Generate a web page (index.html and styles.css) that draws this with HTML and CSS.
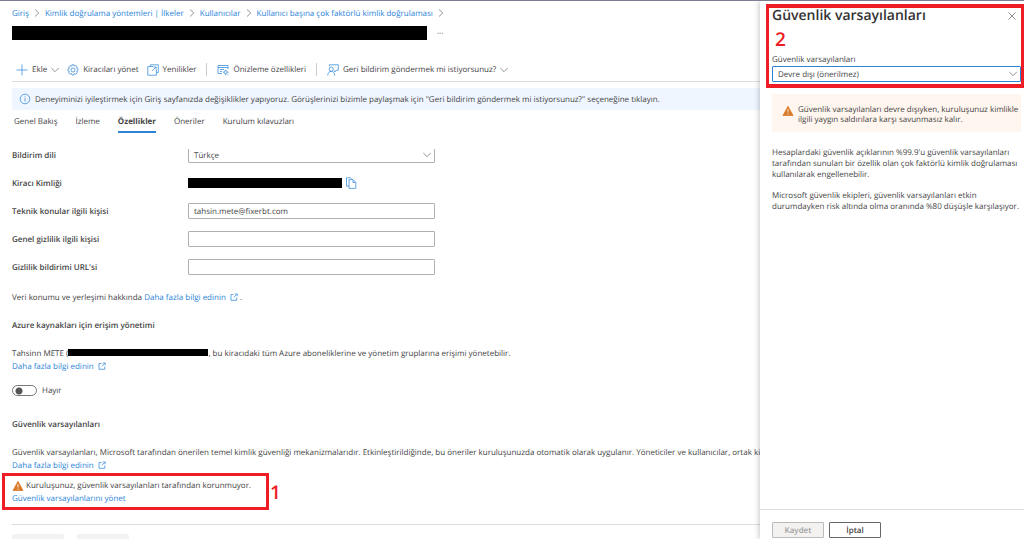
FILE: index.html
```html
<!DOCTYPE html>
<html lang="tr">
<head>
    <meta charset="utf-8">
    <title>Güvenlik varsayılanları</title>
    <link rel="stylesheet" href="styles.css">
</head>
<body>
    <svg class="symbols" aria-hidden="true">
        <symbol id="chevron-right" viewBox="0 0 8 8"><path d="M2 .5 5.8 4 2 7.5"/></symbol>
        <symbol id="chevron-down" viewBox="0 0 8 8"><path d="M.3 2 4 5.7 7.7 2"/></symbol>
        <symbol id="external" viewBox="0 0 8 8"><path d="M3.5 1.5H1v5.8h5.8V4.5M4.8 1h2.4v2.2M7 1.2 3.8 4.4"/></symbol>
        <symbol id="warning" viewBox="0 0 12 12">
            <path class="sign" d="M6 1.3 11 10.5H1Z"/>
            <path class="mark" d="M6 4v3.6M6 8.6v1.2"/>
        </symbol>
    </svg>

    <main>
        <nav class="breadcrumb" aria-label="İçerik haritası">
            <a href="#">Giriş</a>
            <svg class="icon small"><use href="#chevron-right"/></svg>
            <a href="#">Kimlik doğrulama yöntemleri | İlkeler</a>
            <svg class="icon small"><use href="#chevron-right"/></svg>
            <a href="#">Kullanıcılar</a>
            <svg class="icon small"><use href="#chevron-right"/></svg>
            <a href="#">Kullanıcı başına çok faktörlü kimlik doğrulaması</a>
            <svg class="icon small"><use href="#chevron-right"/></svg>
        </nav>

        <div class="title">
            <span class="redacted name"></span>
            <button class="more" aria-label="Diğer">···</button>
        </div>

        <div class="toolbar">
            <button>
                <svg class="icon blue" viewBox="0 0 12 12"><path d="M6 .5v11M.5 6h11"/></svg>
                Ekle
                <svg class="icon small"><use href="#chevron-down"/></svg>
            </button>
            <button>
                <svg class="icon blue" viewBox="0 0 12 12">
                    <path d="m5 .8 2 0 .4 1.3 1.3-.6 1.5 1.4-.6 1.3 1.4.6v2L9.6 7.5l.6 1.4-1.4 1.4-1.4-.6L6.9 11H5l-.5-1.4-1.3.6-1.5-1.4.7-1.3L1 7V5l1.4-.6-.7-1.3 1.4-1.5 1.4.6Z"/>
                    <circle cx="6" cy="6" r="2"/>
                </svg>
                Kiracıları yönet
            </button>
            <button>
                <svg class="icon blue" viewBox="0 0 12 12">
                    <path d="M3.5 2.5V.8h7.8v7.7H9.5M6 2.5H.8v8.7h8.6V6"/>
                    <path d="M5 7 8.8 3.2M6.4 3h2.7v2.7"/>
                </svg>
                Yenilikler
            </button>
            <span class="separator"></span>
            <button>
                <svg class="icon blue" viewBox="0 0 12 12">
                    <path d="M5 9.5H1v-8h10V5M1 3.5h10M3 5.5h4M3 7.5h2"/>
                    <circle cx="8.6" cy="8.2" r="1.5"/>
                    <path d="M8.6 5.6v1M8.6 9.8v1.4M6 8.2h1M10.2 8.2h1.4M10 9.7l1 1"/>
                </svg>
                Önizleme özellikleri
            </button>
            <span class="separator"></span>
            <button>
                <svg class="icon blue" viewBox="0 0 12 12">
                    <circle cx="4.3" cy="5.2" r="2.1"/>
                    <path d="M.7 11.5c.2-2.7 1.6-4.2 3.6-4.2s3.2 1.5 3.5 4.2M2.5 2.3V.8h8.8v5.4H9.6L7.8 8V6.2"/>
                </svg>
                Geri bildirim göndermek mi istiyorsunuz?
                <svg class="icon small"><use href="#chevron-down"/></svg>
            </button>
        </div>

        <div class="banner">
            <svg class="icon blue" viewBox="0 0 12 12"><circle cx="6" cy="6" r="4.8"/><path d="M6 5.2v3.3M6 3.4v.9"/></svg>
            Deneyiminizi iyileştirmek için Giriş sayfanızda değişiklikler yapıyoruz. Görüşlerinizi bizimle paylaşmak için "Geri bildirim göndermek mi istiyorsunuz?" seçeneğine tıklayın.
        </div>

        <nav class="tabs">
            <a href="#">Genel Bakış</a>
            <a href="#">İzleme</a>
            <a href="#" class="active" aria-current="page">Özellikler</a>
            <a href="#">Öneriler</a>
            <a href="#">Kurulum kılavuzları</a>
        </nav>

        <div class="content">
            <form class="fields">
                <label for="language">Bildirim dili</label>
                <span class="select">
                    <select id="language"><option>Türkçe</option></select>
                    <svg class="icon small"><use href="#chevron-down"/></svg>
                </span>

                <span class="label">Kiracı Kimliği</span>
                <span class="tenant">
                    <span class="redacted id"></span>
                    <button type="button" class="copy" aria-label="Kopyala">
                        <svg class="icon blue" viewBox="0 0 12 12"><path d="M4 9.2H1.5V.8h4l1 1M4 2.6h4L10.8 5.4v6H4ZM8 2.8v2.7h2.6"/></svg>
                    </button>
                </span>

                <label for="technical">Teknik konular ilgili kişisi</label>
                <input id="technical" type="text" value="tahsin.mete@fixerbt.com">

                <label for="privacy">Genel gizlilik ilgili kişisi</label>
                <input id="privacy" type="text">

                <label for="statement">Gizlilik bildirimi URL'si</label>
                <input id="statement" type="text">
            </form>

            <p class="location">Veri konumu ve yerleşimi hakkında <a href="#">Daha fazla bilgi edinin <svg class="icon small"><use href="#external"/></svg></a> .</p>

            <h2>Azure kaynakları için erişim yönetimi</h2>
            <p>
                Tahsinn METE (<span class="redacted mail"></span>, bu kiracıdaki tüm Azure aboneliklerine ve yönetim gruplarına erişimi yönetebilir.<br>
                <a href="#">Daha fazla bilgi edinin <svg class="icon small"><use href="#external"/></svg></a>
            </p>
            <label class="toggle"><input type="checkbox" role="switch"> Hayır</label>

            <h2>Güvenlik varsayılanları</h2>
            <p>
                Güvenlik varsayılanları, Microsoft tarafından önerilen temel kimlik güvenliği mekanizmalarıdır. Etkinleştirildiğinde, bu öneriler kuruluşunuzda otomatik olarak uygulanır. Yöneticiler ve kullanıcılar, ortak kimlikle i<br>
                <a href="#">Daha fazla bilgi edinin <svg class="icon small"><use href="#external"/></svg></a>
            </p>

            <div class="step">
                <div class="frame">
                    <span class="status"><svg class="icon"><use href="#warning"/></svg> Kuruluşunuz, güvenlik varsayılanları tarafından korunmuyor.</span>
                    <a href="#">Güvenlik varsayılanlarını yönet</a>
                </div>
                <span class="number">1</span>
            </div>

            <div class="actions">
                <button disabled aria-label="Kaydet"></button>
                <button disabled aria-label="At"></button>
            </div>
        </div>
    </main>

    <aside>
        <header class="frame">
            <div class="heading">
                <h1>Güvenlik varsayılanları</h1>
                <button class="close" aria-label="Kapat">
                    <svg class="icon small" viewBox="0 0 8 8"><path d="m.4.4 7.2 7.2M7.6.4.4 7.6"/></svg>
                </button>
            </div>
            <span class="number">2</span>
            <label for="defaults">Güvenlik varsayılanları</label>
            <span class="select">
                <select id="defaults"><option>Devre dışı (önerilmez)</option></select>
                <svg class="icon small"><use href="#chevron-down"/></svg>
            </span>
        </header>

        <div class="alert">
            <svg class="icon"><use href="#warning"/></svg>
            <p>Güvenlik varsayılanları devre dışıyken, kuruluşunuz kimlikle ilgili yaygın saldırılara karşı savunmasız kalır.</p>
        </div>

        <div class="text">
            <p>Hesaplardaki güvenlik açıklarının %99.9'u güvenlik varsayılanları tarafından sunulan bir özellik olan çok faktörlü kimlik doğrulaması kullanılarak engellenebilir.</p>
            <p>Microsoft güvenlik ekipleri, güvenlik varsayılanları etkin durumdayken risk altında olma oranında %80 düşüşle karşılaşıyor.</p>
        </div>

        <footer>
            <button disabled>Kaydet</button>
            <button>İptal</button>
        </footer>
    </aside>
</body>
</html>
```
FILE: styles.css
```css
*
{
    box-sizing: border-box;
}

body
{
    display: flex;
    height: 100vh;
    margin: 0;
    border-top: 1px solid #7d8094;
    overflow: hidden;

    background-color: #ffffff;
    color: #444444;
    font-family: "Open Sans", "Noto Sans", sans-serif;
    font-size: 8px;
    line-height: 13px;
    text-rendering: geometricPrecision;
}

h1, h2, p
{
    margin: 0;
}

a
{
    color: #2b84d8;
    text-decoration: none;
}

button, input, select
{
    color: inherit;
    font: inherit;
    text-rendering: inherit;
}

button
{
    padding: 0;
    border: none;
    background: none;
}

.symbols
{
    position: absolute;
    width: 0;
    height: 0;
}

.icon
{
    flex: none;
    width: 12px;
    height: 12px;

    fill: none;
    stroke: #777777;
    stroke-width: 0.8;
}

.icon.small
{
    width: 8px;
    height: 8px;
}

.icon.blue, a .icon
{
    stroke: #3c8fdc;
}

.sign
{
    fill: #d87a28;
    stroke: #d87a28;
    stroke-linejoin: round;
}

.mark
{
    stroke: #ffffff;
}

.redacted
{
    display: inline-block;
    background-color: #000000;
}

/* main page */

main
{
    display: flex;
    flex: 1;
    flex-direction: column;
    min-width: 0;
    padding-left: 12px;
    overflow: hidden;

    white-space: nowrap;
}

.breadcrumb
{
    display: flex;
    align-items: center;
    gap: 4px;
    height: 24px;
}

.title
{
    display: flex;
    align-items: center;
    gap: 10px;
    height: 16px;
}

.name
{
    width: 415px;
    height: 14px;
}

.toolbar
{
    display: flex;
    align-items: center;
    gap: 8px;
    height: 24px;
    margin-top: 17px;
    padding-left: 4px;
    border-bottom: 1px solid #dddddd;
}

.toolbar button
{
    display: flex;
    align-items: center;
    gap: 4px;
}

.separator
{
    width: 1px;
    height: 13px;
    margin: 0 2px;
    background-color: #cccccc;
}

.banner
{
    display: flex;
    align-items: center;
    gap: 4px;
    height: 22px;
    margin-top: 6px;
    padding-left: 7px;
    background-color: #eff6ff;
}

.tabs
{
    display: flex;
    gap: 18px;
    height: 23px;
    padding-left: 2px;
}

.tabs a
{
    padding-top: 5px;
    color: #444444;
}

.tabs .active
{
    border-bottom: 2px solid #2b84d8;
    font-weight: bold;
}

.content
{
    flex: 1;
    min-height: 0;
    margin: 16px 0 0 -12px;
    padding-left: 12px;
    overflow: hidden;
}

/* the form is scrolled a little under the tabs */
.fields
{
    display: grid;
    grid-template-columns: 176px 247px;
    grid-auto-rows: 16px;
    align-items: center;
    row-gap: 12px;
    margin-top: -2px;
}

.fields label, .label
{
    font-weight: 600;
}

.fields input, select
{
    width: 100%;
    height: 16px;
    padding: 0 5px;
    border: 1px solid #b0b0b0;
    border-radius: 1px;
    background-color: #ffffff;
}

.select
{
    display: block;
    position: relative;
}

select
{
    display: block;
    appearance: none;
}

.select .icon
{
    position: absolute;
    top: 4px;
    right: 4px;
    pointer-events: none;
}

.tenant
{
    display: flex;
    align-items: center;
    gap: 3px;
}

.id
{
    width: 154px;
    height: 10px;
}

.copy
{
    display: flex;
}

.location
{
    margin-top: 16px;
}

h2
{
    margin: 15px 0;
    font-size: 8px;
    font-weight: 600;
}

p .icon.small
{
    margin-left: 2px;
    vertical-align: -1px;
}

.mail
{
    width: 140px;
    height: 7px;
}

.toggle
{
    display: flex;
    align-items: center;
    gap: 5px;
    margin: 11px 0 21px;
}

.toggle input
{
    width: 25px;
    height: 11px;
    margin: 0;
    border: 1px solid #777777;
    border-radius: 6px;
    appearance: none;
    background: radial-gradient(circle at 6px 5px, #555555 3px, transparent 4px);
}

.frame
{
    border: 3px solid #ee1c24;
}

.number
{
    color: #ee1c24;
    font-size: 19px;
    font-weight: 600;
    line-height: 20px;
}

.step
{
    display: flex;
    align-items: center;
    gap: 1px;
    margin: 1px 0 14px -10px;
}

.step .frame
{
    display: flex;
    flex-direction: column;
    width: 267px;
    height: 37px;
    padding: 3px 7px;
}

.status
{
    display: flex;
    align-items: center;
    gap: 2px;
}

.actions
{
    display: flex;
    gap: 13px;
    padding-top: 9px;
    border-top: 1px solid #dddddd;
}

.actions button
{
    width: 52px;
    height: 16px;
    border-radius: 2px;
    background-color: #f3f2f1;
}

/* side panel */

aside
{
    display: flex;
    flex: none;
    flex-direction: column;
    position: relative;
    width: 264px;
    background-color: #ffffff;
    box-shadow: 0 0 6px rgba(0, 0, 0, 0.3);
}

aside .frame
{
    display: flex;
    flex-direction: column;
    height: 84px;
    margin: 3px 0 0 6px;
    padding-left: 3px;
    border-width: 4px 3px;
}

.heading
{
    display: flex;
    align-items: center;
    justify-content: space-between;
    padding-right: 5px;
}

h1
{
    color: #333333;
    font-size: 14px;
    font-weight: 600;
    line-height: 16px;
}

.close
{
    display: flex;
}

aside .number
{
    margin: 5px 0 0 3px;
}

aside label
{
    margin-top: 4px;
}

aside select
{
    border-color: #2b84d8;
}

.alert
{
    display: flex;
    gap: 4px;
    margin: 6px 3px 0 12px;
    padding: 11px 0 7px 10px;
    background-color: #fff6ef;
    line-height: 10px;
}

.text
{
    flex: 1;
    padding: 15px 0 0 12px;
    line-height: 11px;
}

.text p
{
    margin-bottom: 10px;
}

footer
{
    display: flex;
    gap: 5px;
    height: 30px;
    padding: 12px 12px 0;
    border-top: 1px solid #dddddd;
}

footer button
{
    width: 52px;
    height: 16px;
    border: 1px solid #666666;
    border-radius: 1px;
    font-weight: 600;
}

footer button:disabled
{
    border-color: #bbbbbb;
    background-color: #f3f2f1;
    color: #a0a0a0;
}
```
